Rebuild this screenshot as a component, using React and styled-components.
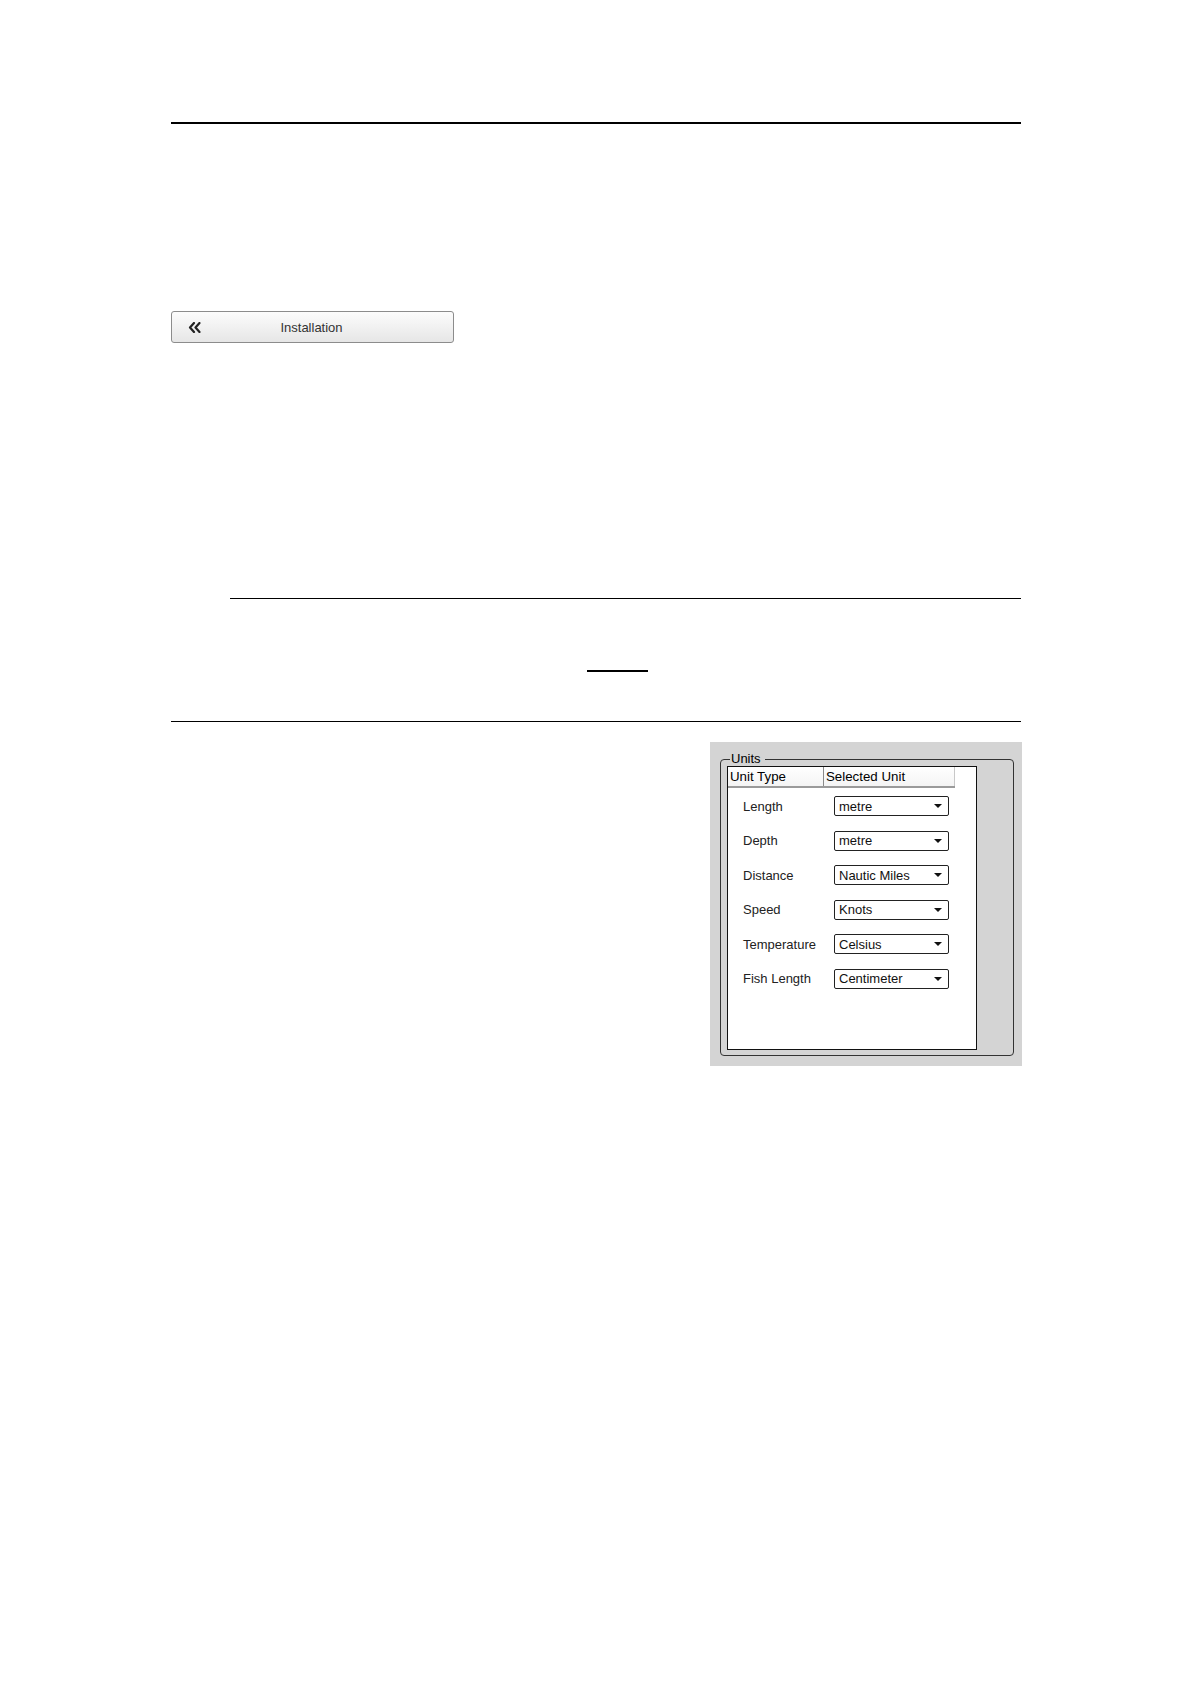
import styled, { createGlobalStyle } from 'styled-components';

const GlobalStyle = createGlobalStyle`
    * { box-sizing: border-box; }
    body {
        margin: 0;
        background: #fff;
        font-family: "Liberation Sans", Arial, sans-serif;
        color: #000;
    }
`;

const units = [
    { type: 'Length', value: 'metre' },
    { type: 'Depth', value: 'metre' },
    { type: 'Distance', value: 'Nautic Miles' },
    { type: 'Speed', value: 'Knots' },
    { type: 'Temperature', value: 'Celsius' },
    { type: 'Fish Length', value: 'Centimeter' },
];

function App() {
    return (
        <Page>
            <GlobalStyle />
            <Column>
                <Rule $weight={2} $top={122} />
                <BackButton type="button">
                    <ChevronsLeft />
                    <span>Installation</span>
                </BackButton>
                <Rule $weight={1} $top={255} $indent={59} />
                <ShortRule />
                <Rule $weight={1} $top={49} />
                <FigureRow>
                    <Panel>
                        <GroupBox>
                            <legend>Units</legend>
                            <ListBox>
                                <Header>
                                    <HeaderCell $width={96}>Unit Type</HeaderCell>
                                    <HeaderCell $width={131}>Selected Unit</HeaderCell>
                                </Header>
                                <Rows>
                                    {units.map((u) => (
                                        <UnitRow key={u.type}>
                                            <Label>{u.type}</Label>
                                            <Dropdown>
                                                <span>{u.value}</span>
                                                <Caret />
                                            </Dropdown>
                                        </UnitRow>
                                    ))}
                                </Rows>
                            </ListBox>
                        </GroupBox>
                    </Panel>
                </FigureRow>
            </Column>
        </Page>
    );
}

export default App;

function ChevronsLeft() {
    return (
        <Chevrons width="13" height="11" viewBox="0 0 13 11">
            <path d="M6 1 L2 5.5 L6 10" />
            <path d="M11.5 1 L7.5 5.5 L11.5 10" />
        </Chevrons>
    );
}

const Page = styled.div`
    width: 1191px;
    min-height: 1684px;
    background: #fff;
    overflow: hidden;
`;

const Column = styled.div`
    margin-left: 171px;
    width: 850px;
    display: flex;
    flex-direction: column;
`;

const Rule = styled.div`
    height: ${(p) => p.$weight}px;
    background: #000;
    margin-top: ${(p) => p.$top}px;
    margin-left: ${(p) => p.$indent || 0}px;
`;

const ShortRule = styled.div`
    width: 61px;
    height: 2px;
    background: #000;
    margin: 71px 0 0 416px;
`;

const BackButton = styled.button`
    margin-top: 187px;
    width: 283px;
    height: 32px;
    padding: 0 0 0 16px;
    display: grid;
    grid-template-columns: 1fr auto 1fr;
    align-items: center;
    border: 1px solid #8c8c8c;
    border-radius: 3px;
    background: linear-gradient(#fcfcfc, #f1f1f1 50%, #e6e6e6);
    font-family: "Liberation Sans", Arial, sans-serif;
    font-size: 13px;
    color: #333;

    span {
        grid-column: 2;
        margin-left: -18px;
    }
`;

const Chevrons = styled.svg`
    grid-column: 1;
    justify-self: start;
    fill: none;
    stroke: #222;
    stroke-width: 2.2;
    stroke-linecap: round;
    stroke-linejoin: round;
`;

const FigureRow = styled.div`
    margin-top: 20px;
    display: flex;
    justify-content: flex-end;
    margin-right: -1px;
`;

const Panel = styled.div`
    width: 312px;
    height: 324px;
    background: #d4d4d4;
    padding: 10px 8px 10px 10px;
    display: flex;
`;

const GroupBox = styled.fieldset`
    flex: 1;
    margin: 0;
    padding: 0 4px 5px 6px;
    border: 1px solid #333;
    border-radius: 4px;
    min-width: 0;

    legend {
        margin-left: 3px;
        padding: 0 4px 0 1px;
        font-size: 13px;
        line-height: 14px;
        color: #000;
    }
`;

const ListBox = styled.div`
    width: 250px;
    height: 284px;
    background: #fff;
    border: 1px solid #111;
`;

const Header = styled.div`
    display: flex;
    height: 21px;
    width: 227px;
    border-bottom: 2px solid #9a9a9a;
    background: linear-gradient(#ffffff, #f4f4f4);
`;

const HeaderCell = styled.div`
    width: ${(p) => p.$width}px;
    padding-left: 2px;
    font-size: 13.3px;
    line-height: 19px;
    color: #000;
    border-right: 1px solid #c8c8c8;

    &:first-child {
        border-right-color: #8a8a8a;
    }
`;

const Rows = styled.div`
    padding-top: 1px;
    display: flex;
    flex-direction: column;
`;

const UnitRow = styled.div`
    height: 34.5px;
    display: flex;
    align-items: center;
    padding-left: 15px;
`;

const Label = styled.div`
    width: 91px;
    font-size: 13px;
    color: #222;
`;

const Dropdown = styled.div`
    width: 115px;
    height: 20px;
    border: 1px solid #222;
    border-radius: 2px;
    background: #fff;
    display: flex;
    align-items: center;
    justify-content: space-between;
    padding: 0 6px 0 4px;
    font-size: 13px;
    color: #111;
`;

const Caret = styled.i`
    width: 0;
    height: 0;
    border-left: 4px solid transparent;
    border-right: 4px solid transparent;
    border-top: 4px solid #111;
`;
